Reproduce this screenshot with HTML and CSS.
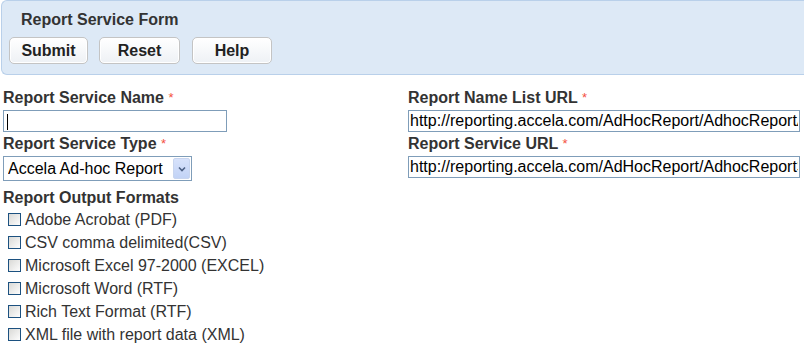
FILE: index.html
```html
<!DOCTYPE html>
<html lang="en">
<head>
  <meta charset="UTF-8">
  <title>Report Service Form</title>
  <link rel="stylesheet" href="styles.css">
</head>
<body>

<div class="panel">
  <h2 class="panel-title">Report Service Form</h2>
  <div class="toolbar">
    <button type="button" class="btn btn-submit">Submit</button>
    <button type="button" class="btn btn-reset">Reset</button>
    <button type="button" class="btn btn-help">Help</button>
  </div>
</div>

<form class="form">
  <div class="col col-left">
    <label class="field-label">Report Service Name <span class="req">*</span></label>
    <div class="name-box">
      <input type="text" class="text-input name-input">
      <span class="caret"></span>
    </div>

    <label class="field-label">Report Service Type <span class="req">*</span></label>
    <div class="select-wrap">
      <select class="select">
        <option>Accela Ad-hoc Report</option>
      </select>
      <span class="select-arrow">
        <svg width="8" height="6" viewBox="0 0 8 6"><path d="M1 1.5 L4 4.5 L7 1.5" fill="none" stroke="#4d6185" stroke-width="1.6"/></svg>
      </span>
    </div>

    <label class="field-label group-label">Report Output Formats</label>
    <div class="checks">
      <label class="check"><input type="checkbox"> Adobe Acrobat (PDF)</label>
      <label class="check"><input type="checkbox"> CSV comma delimited(CSV)</label>
      <label class="check"><input type="checkbox"> Microsoft Excel 97-2000 (EXCEL)</label>
      <label class="check"><input type="checkbox"> Microsoft Word (RTF)</label>
      <label class="check"><input type="checkbox"> Rich Text Format (RTF)</label>
      <label class="check"><input type="checkbox"> XML file with report data (XML)</label>
    </div>
  </div>

  <div class="col col-right">
    <label class="field-label">Report Name List URL <span class="req">*</span></label>
    <input type="text" class="text-input url-input" value="http://reporting.accela.com/AdHocReport/AdhocReportAdapter.asmx">

    <label class="field-label">Report Service URL <span class="req">*</span></label>
    <input type="text" class="text-input url-input" value="http://reporting.accela.com/AdHocReport/AdhocReportService.asmx">
  </div>
</form>

</body>
</html>
```

FILE: styles.css
```css
body {
  margin: 0;
  font-family: "Liberation Sans", Arial, sans-serif;
  font-size: 16px;
  color: #333;
  background: #fff;
}

.panel {
  margin-left: 1px;
  height: 75px;
  background: #dde9f6;
  border: 1px solid #b9d0ea;
  border-right: none;
  border-radius: 6px 0 0 6px;
  box-sizing: border-box;
}

.panel-title {
  margin: 0;
  padding: 10px 0 0 19px;
  font-size: 16px;
  line-height: 18px;
  font-weight: bold;
  color: #333;
}

.toolbar {
  display: flex;
  gap: 11px;
  padding: 8px 0 0 7px;
}

.btn {
  height: 27px;
  padding: 0;
  font-family: "Liberation Sans", Arial, sans-serif;
  font-size: 16px;
  font-weight: bold;
  color: #222;
  background: linear-gradient(#ffffff, #eef1f5);
  border: 1px solid #c4c4c4;
  border-radius: 5px;
  box-shadow: inset 0 0 0 1px #fff;
}

.btn-submit { width: 79px; }
.btn-reset { width: 81px; margin-right: 1px; }
.btn-help { width: 80px; }

.form {
  display: grid;
  grid-template-columns: 405px 1fr;
  margin: 14px 0 0 3px;
}

.col {
  display: flex;
  flex-direction: column;
  align-items: flex-start;
}

.field-label {
  font-weight: bold;
  line-height: 18px;
  color: #333;
}

.req {
  color: #f4503f;
  font-weight: normal;
  font-size: 13px;
  vertical-align: top;
}

.text-input {
  margin: 3px 0 3px;
  height: 22px;
  padding: 0 1px;
  box-sizing: border-box;
  border: 1px solid #7f9db9;
  font-family: "Liberation Sans", Arial, sans-serif;
  font-size: 16px;
  color: #000;
  outline: none;
}

.name-box {
  position: relative;
}

.caret {
  position: absolute;
  left: 4px;
  top: 7px;
  width: 1px;
  height: 16px;
  background: #000;
}

.name-input { width: 224px; }
.url-input { width: 392px; }

.select-wrap {
  position: relative;
  margin: 3px 0 8px;
}

.select {
  width: 189px;
  height: 25px;
  padding: 0 0 0 4px;
  -webkit-appearance: none;
  appearance: none;
  border: 1px solid #7f9db9;
  border-radius: 0;
  background: #fff;
  font-family: "Liberation Sans", Arial, sans-serif;
  font-size: 16px;
  color: #000;
}

.select-arrow {
  position: absolute;
  top: 2px;
  right: 2px;
  width: 17px;
  height: 21px;
  display: flex;
  align-items: center;
  justify-content: center;
  background: linear-gradient(#d7e2fb, #c2d3f6);
  border: 1px solid #c8d5ef;
  box-sizing: border-box;
  border-radius: 2px;
}

.group-label {
  margin-bottom: 1px;
}

.checks {
  display: flex;
  flex-direction: column;
}

.check {
  display: flex;
  align-items: center;
  gap: 4px;
  height: 23px;
  padding-left: 5px;
  font-size: 16px;
  color: #333;
}

.check input {
  -webkit-appearance: none;
  appearance: none;
  width: 13px;
  height: 13px;
  margin: 0;
  border: 1px solid #1c5180;
  background: linear-gradient(135deg, #d9d9d6, #fdfdfd);
}
```
